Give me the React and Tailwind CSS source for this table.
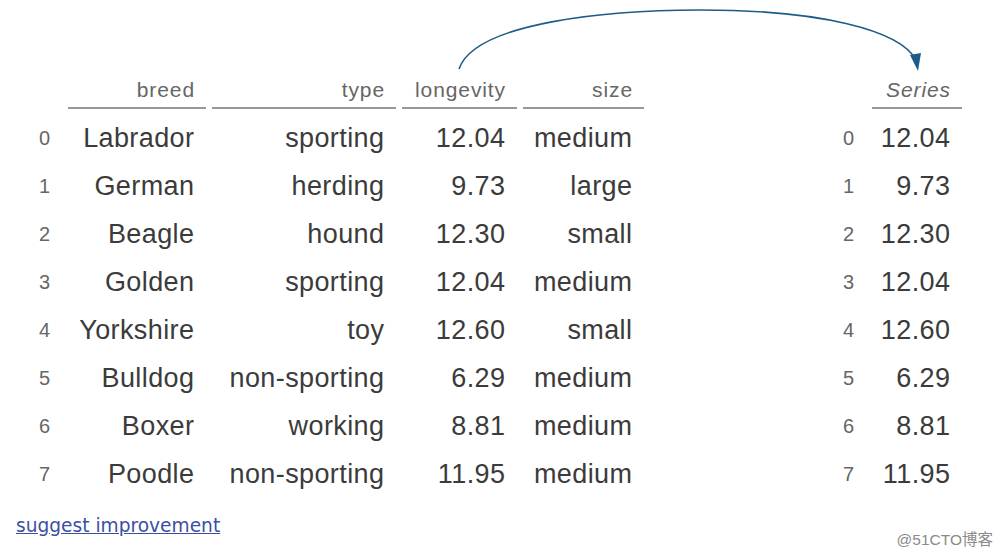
const rows = [
  ['Labrador', 'sporting', '12.04', 'medium'],
  ['German', 'herding', '9.73', 'large'],
  ['Beagle', 'hound', '12.30', 'small'],
  ['Golden', 'sporting', '12.04', 'medium'],
  ['Yorkshire', 'toy', '12.60', 'small'],
  ['Bulldog', 'non-sporting', '6.29', 'medium'],
  ['Boxer', 'working', '8.81', 'medium'],
  ['Poodle', 'non-sporting', '11.95', 'medium'],
]

const font = { fontFamily: '"Liberation Sans", Arial, sans-serif' }

function Head({ children, line = true, italic = false }) {
  return (
    <div
      className={`h-[39px] flex items-end justify-end pr-[11px] pb-[5px] text-[21px] leading-6 tracking-[0.9px] text-[#666] ${line ? 'border-b-2 border-[#999]' : ''} ${italic ? 'italic' : ''}`}
    >
      {children}
    </div>
  )
}

function Cell({ children, idx = false }) {
  return (
    <div
      className={`h-12 flex items-center justify-end ${idx ? 'pr-3 text-[20px] text-[#666]' : 'pr-[11.6px] text-[27px] tracking-[0.4px] text-[#3b3b3b]'}`}
    >
      {children}
    </div>
  )
}

export default function App() {
  return (
    <div className="relative w-[1004px] h-[560px] bg-white overflow-hidden" style={font}>
      {/* arrow from longevity to Series */}
      <svg className="absolute left-0 top-0 pointer-events-none" width="1004" height="120">
        <path d="M459 69 C 475 22, 610 10, 700 10 C 820 10, 900 30, 916 60" fill="none" stroke="#1d5c86" strokeWidth="1.6" />
        <path d="M910 55 L 918 71 L 921 53 Z" fill="#1d5c86" />
      </svg>

      <div className="flex pt-[70px] pl-[28px] gap-[188px]">
        {/* dataframe */}
        <div className="grid grid-cols-[34px_138px_184px_115px_121px] gap-x-[6px]">
          <Head line={false}></Head>
          <Head>breed</Head>
          <Head>type</Head>
          <Head>longevity</Head>
          <Head>size</Head>
          <div className="col-span-5 h-[5px]" />
          {rows.map((r, i) => (
            <div key={i} className="contents">
              <Cell idx>{i}</Cell>
              {r.map((v, j) => (
                <Cell key={j}>{v}</Cell>
              ))}
            </div>
          ))}
        </div>

        {/* series */}
        <div className="grid grid-cols-[34px_90px] gap-x-[6px]">
          <Head line={false}></Head>
          <Head italic>Series</Head>
          <div className="col-span-2 h-[5px]" />
          {rows.map((r, i) => (
            <div key={i} className="contents">
              <Cell idx>{i}</Cell>
              <Cell>{r[2]}</Cell>
            </div>
          ))}
        </div>
      </div>

      <div className="flex justify-between items-start pl-4 pr-[11px] mt-[17px]">
        <a
          href="#"
          className="text-[18.6px] leading-[22px] text-[#3c50a3] underline"
          style={{ fontFamily: '"DejaVu Sans", Verdana, sans-serif' }}
        >
          suggest improvement
        </a>
        <span
          className="mt-[17px] text-[15.5px] leading-4 text-[#8a8a8a]"
          style={{ fontFamily: '"Liberation Sans", "Noto Sans CJK SC", sans-serif' }}
        >
          @51CTO博客
        </span>
      </div>
    </div>
  )
}
